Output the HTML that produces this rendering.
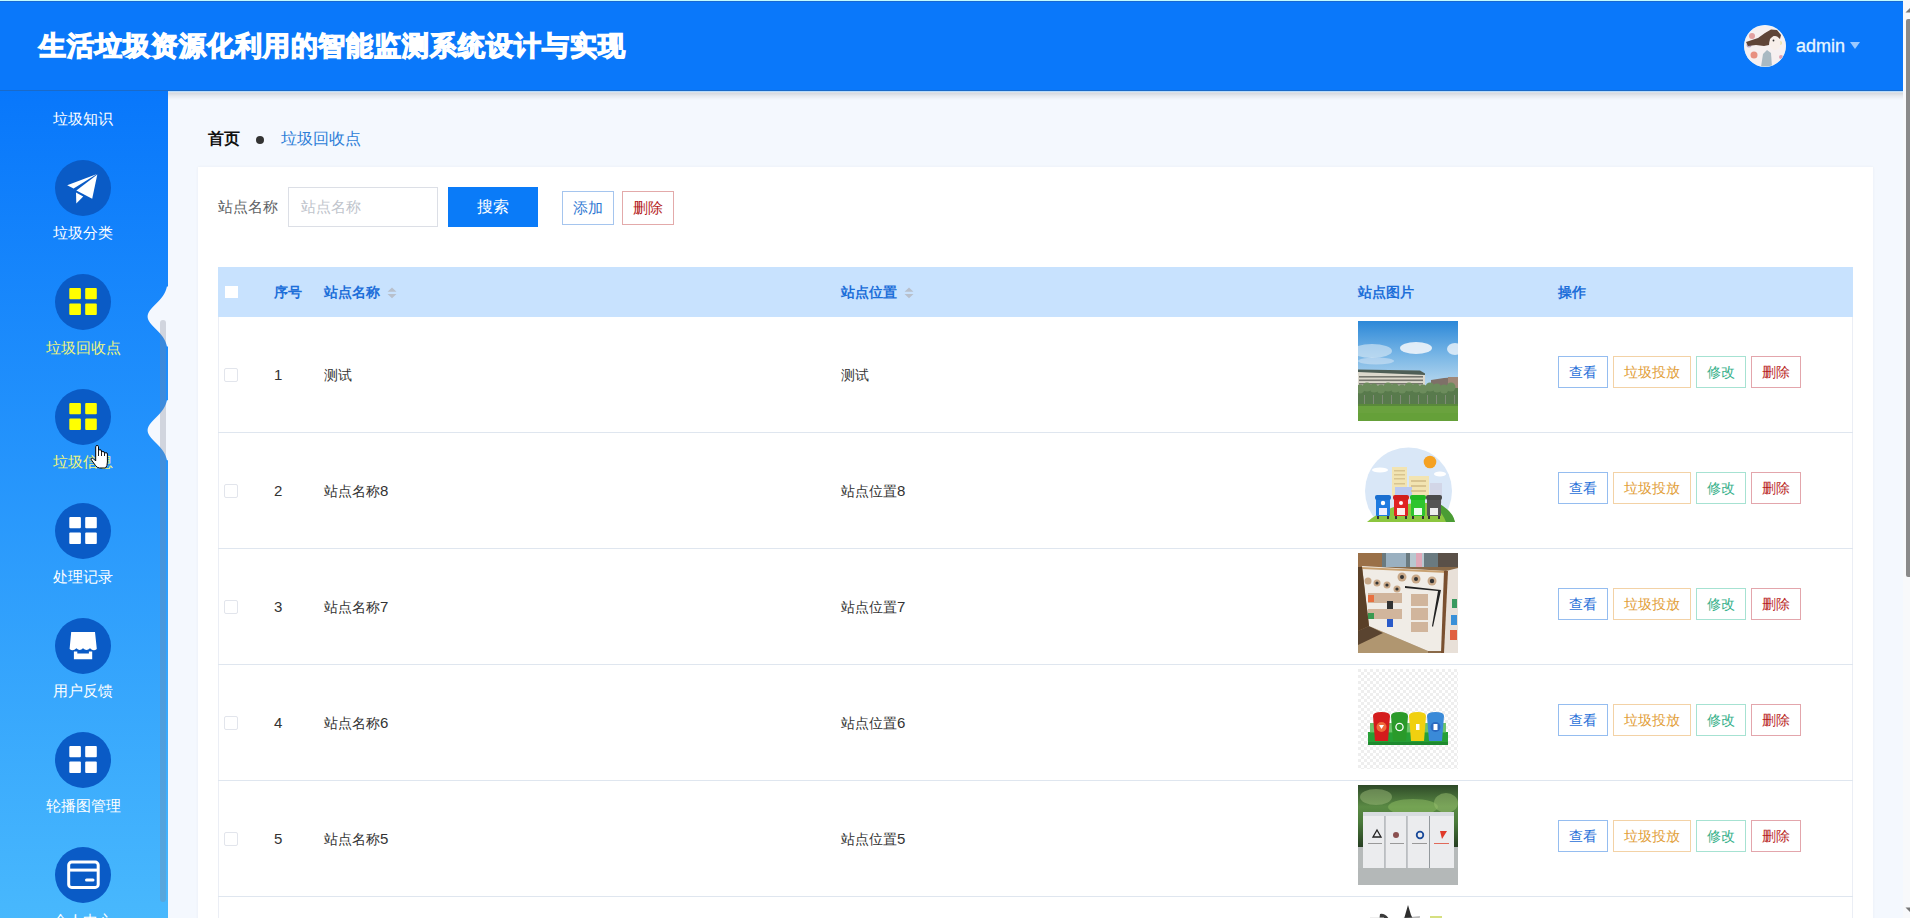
<!DOCTYPE html>
<html><head><meta charset="utf-8">
<style>
*{box-sizing:border-box;margin:0;padding:0}
html,body{width:1910px;height:918px;overflow:hidden}
body{font-family:"Liberation Sans",sans-serif;background:#f4f8fe;position:relative}
.abs{position:absolute}
#hdr{left:0;top:0;width:1903px;height:91px;background:#0a78fa;border-top:1px solid #c0faff;box-shadow:inset 0 1px 0 #1a68d0,inset 0 -1px 0 #1a6ac8;z-index:5}
#hsh{left:168px;top:91px;width:1735px;height:9px;background:linear-gradient(180deg,rgba(0,0,0,.04) 0,rgba(0,0,0,.12) 25%,rgba(0,0,0,.06) 55%,rgba(0,0,0,0) 100%);z-index:4}
#hline{left:168px;top:91px;width:1735px;height:1px;background:#b8dcfc;z-index:4}
#title{left:39px;top:27px;font-size:26.6px;letter-spacing:0.95px;font-weight:bold;color:#fff;white-space:nowrap;line-height:38px;-webkit-text-stroke:1.3px #fff}
#avatar{left:1744px;top:25px;width:42px;height:42px;border-radius:50%;background:radial-gradient(circle at 60% 40%,#f4e8e4 0,#e9d6cf 30%,#b59c8e 45%,#dfe4e6 60%,#c8d0d0 100%);border:1px solid #fff}
#admin{left:1796px;top:35px;font-size:18px;color:#e6f6ff;line-height:22px;-webkit-text-stroke:0.3px #e6f6ff}
#caret{left:1850px;top:42px;width:0;height:0;border-left:5.5px solid transparent;border-right:5.5px solid transparent;border-top:7px solid #9bc9ff}
#scroll{left:1903px;top:0;width:7px;height:918px;background:#f8f9fb}
#thumb{left:1906px;top:19px;width:4px;height:558px;background:#8a8a8a;border-radius:2px 0 0 2px}
#side{left:0;top:90px;width:168px;height:828px;background:linear-gradient(180deg,#0877fb 0%,#48b8fd 100%)}
.it{position:absolute;left:0;width:168px;height:114px}
.ic{position:absolute;left:55px;width:56px;height:56px;border-radius:50%;background:#0a5bc6}
.lb{position:absolute;left:0;width:166px;margin-top:-1px;text-align:center;font-size:15px;color:#fff;line-height:20px;white-space:nowrap}
.lb.act{color:#eef57c}
#sbar{left:160px;top:320px;width:6px;height:582px;background:rgba(128,134,150,.3);border-radius:3px}
#crumb1{left:208px;top:128px;font-size:16px;font-weight:bold;color:#111;line-height:22px}
#dot{left:256px;top:136px;width:8px;height:8px;border-radius:50%;background:#333}
#crumb2{left:281px;top:128px;font-size:16px;color:#2f7fd8;line-height:22px}
#card{left:198px;top:167px;width:1675px;height:760px;background:#fff;box-shadow:0 0 3px rgba(0,20,60,.05)}
#lbl{left:218px;top:197px;font-size:15px;color:#606266;line-height:20px}
#inp{left:288px;top:187px;width:150px;height:40px;border:1px solid #dcdfe6;background:#fff}
#inp span{position:absolute;left:12px;top:9px;font-size:15px;color:#c0c4cc;line-height:20px}
#sbtn{left:448px;top:187px;width:90px;height:40px;background:#0a7bf8;color:#fff;font-size:16px;text-align:center;line-height:40px}
.ob{position:absolute;border:1px solid;background:#fff;text-align:center;white-space:nowrap}
#addb{left:562px;top:191px;width:52px;height:34px;border-color:#a5c5ee;color:#2f78d2;font-size:15px;line-height:32px}
#delb{left:622px;top:191px;width:52px;height:34px;border-color:#e3aaaa;color:#b41a1a;font-size:15px;line-height:32px}
#thead{left:218px;top:267px;width:1635px;height:50px;background:#c8e2fe}
.th{position:absolute;top:282px;font-size:14px;font-weight:bold;color:#1e6fd9;line-height:20px;white-space:nowrap}
.sort{position:absolute;top:285px;width:10px;height:12px}
#hcb{left:225px;top:286px;width:13px;height:12px;background:#fff}
#tleft{left:218px;top:317px;width:1px;height:601px;background:#ebeef5}
#tright{left:1852px;top:317px;width:1px;height:601px;background:#ebeef5}
.rl{position:absolute;left:218px;width:1635px;height:1px;background:#dfe6ef}
.cb{position:absolute;left:224px;width:14px;height:14px;border:1px solid #e2e5ec;border-radius:2px;background:#fff}
.td{position:absolute;font-size:14px;color:#333;line-height:20px;white-space:nowrap}
.dg{font-size:15px}
.img{position:absolute;left:1358px;width:100px;height:100px;overflow:hidden}
.bt{position:absolute;height:32px;border:1px solid;background:#fff;font-size:14px;line-height:30px;text-align:center;white-space:nowrap}
.b1{left:1558px;width:50px;border-color:#95bdf0;color:#1f6fd8}
.b2{left:1613px;width:78px;border-color:#f3d2a6;color:#e2a03a}
.b3{left:1696px;width:50px;border-color:#a6e2d2;color:#36b08a}
.b4{left:1751px;width:50px;border-color:#e3a6ac;color:#b81e1e}
</style></head><body>
<div id="hdr" class="abs"></div><div id="hsh" class="abs"></div><div id="hline" class="abs"></div>
<div id="title" class="abs" style="z-index:6">生活垃圾资源化利用的智能监测系统设计与实现</div>
<svg class="abs" style="left:1744px;top:25px;z-index:6" width="42" height="42" viewBox="0 0 42 42"><defs><clipPath id="avc"><circle cx="21" cy="21" r="20.6"/></clipPath><filter id="bl"><feGaussianBlur stdDeviation="0.7"/></filter></defs><circle cx="21" cy="21" r="21" fill="#e6f6ff"/><g clip-path="url(#avc)" filter="url(#bl)"><rect width="42" height="42" fill="#f6f0f0"/><circle cx="8" cy="11" r="3" fill="#e2a0a0"/><circle cx="10" cy="30" r="3.5" fill="#e89080"/><circle cx="5" cy="20" r="2.5" fill="#b8a8c8"/><circle cx="36" cy="18" r="2" fill="#e8e0a0"/><circle cx="37" cy="32" r="2" fill="#e0a0b0"/><path d="M2 17 L14 13 L21 8 L27 4.5 L33 5 L37 10 L36 14 L30 11 L26 14 L25 20 L20 21 L12 20 L4 21 Z" fill="#5e4438"/><ellipse cx="31" cy="18" rx="5.5" ry="7" fill="#f8efea"/><circle cx="29.5" cy="15.5" r="0.9" fill="#333"/><path d="M17 42 L19 29 L23 25 L27 28 L28 42 Z" fill="#a9b9c2"/></g></svg>
<div id="admin" class="abs" style="z-index:6">admin</div>
<div id="caret" class="abs" style="z-index:6"></div>



<div id="side" class="abs"></div>
<div class="lb" style="top:109.5px">垃圾知识</div>
<div class="ic" style="top:159.5px"><svg width="56" height="56" viewBox="0 0 56 56"><path d="M42 14 L12.2 25.3 L18.6 28.6 Z" fill="#fff"/><path d="M42.3 14.5 L21.4 30.6 L37.2 38.7 Z" fill="#fff"/><path d="M21 32.4 L28.2 36.6 L21.3 43.4 Z" fill="#fff"/></svg></div>
<div class="lb" style="top:224.0px">垃圾分类</div>
<div class="ic" style="top:274px"><svg width="56" height="56" viewBox="0 0 56 56"><g fill="#ffff00"><rect x="14.3" y="14" width="11.6" height="11.2" rx="1"/><rect x="30.2" y="14" width="11.6" height="11.2" rx="1"/><rect x="14.3" y="29.6" width="11.6" height="11.3" rx="1"/><rect x="30.2" y="29.6" width="11.6" height="11.3" rx="1"/></g></svg></div>
<div class="lb act" style="top:338.5px">垃圾回收点</div>
<div class="ic" style="top:388.5px"><svg width="56" height="56" viewBox="0 0 56 56"><g fill="#ffff00"><rect x="14.3" y="14" width="11.6" height="11.2" rx="1"/><rect x="30.2" y="14" width="11.6" height="11.2" rx="1"/><rect x="14.3" y="29.6" width="11.6" height="11.3" rx="1"/><rect x="30.2" y="29.6" width="11.6" height="11.3" rx="1"/></g></svg></div>
<div class="lb act" style="top:453.0px">垃圾信息</div>
<div class="ic" style="top:503px"><svg width="56" height="56" viewBox="0 0 56 56"><g fill="#fff"><rect x="14.3" y="14" width="11.6" height="11.2" rx="1"/><rect x="30.2" y="14" width="11.6" height="11.2" rx="1"/><rect x="14.3" y="29.6" width="11.6" height="11.3" rx="1"/><rect x="30.2" y="29.6" width="11.6" height="11.3" rx="1"/></g></svg></div>
<div class="lb" style="top:567.5px">处理记录</div>
<div class="ic" style="top:617.5px"><svg width="56" height="56" viewBox="0 0 56 56"><path d="M16.2 13.9 L40 13.9 L41.8 31 Q38.4 33.8 35 30.2 Q31.5 33.8 28 30.2 Q24.7 33.8 21.4 30.2 Q18 33.8 14.6 31 Z" fill="#fff"/><path d="M18.9 33.6 L22.3 33.6 L22.3 35.5 L33.9 35.5 L33.9 33.6 L37.2 33.6 L37.2 41.2 L18.9 41.2 Z" fill="#fff"/></svg></div>
<div class="lb" style="top:682.0px">用户反馈</div>
<div class="ic" style="top:732px"><svg width="56" height="56" viewBox="0 0 56 56"><g fill="#fff"><rect x="14.3" y="14" width="11.6" height="11.2" rx="1"/><rect x="30.2" y="14" width="11.6" height="11.2" rx="1"/><rect x="14.3" y="29.6" width="11.6" height="11.3" rx="1"/><rect x="30.2" y="29.6" width="11.6" height="11.3" rx="1"/></g></svg></div>
<div class="lb" style="top:796.5px">轮播图管理</div>
<div class="ic" style="top:846.5px"><svg width="56" height="56" viewBox="0 0 56 56"><rect x="13.7" y="15.1" width="29.5" height="25.3" rx="3" fill="none" stroke="#fff" stroke-width="3"/><line x1="13.7" y1="23.1" x2="43.2" y2="23.1" stroke="#fff" stroke-width="3"/><line x1="31.5" y1="32.9" x2="38" y2="32.9" stroke="#fff" stroke-width="3" stroke-linecap="round"/></svg></div>
<div class="lb" style="top:912.0px">个人中心</div>
<svg class="abs" style="left:140px;top:280px" width="28" height="190" viewBox="0 0 28 190"><polygon points="28,6.399999999999999 26.92,6.40 26.69,7.40 26.42,8.40 26.11,9.40 25.76,10.40 25.35,11.40 24.89,12.40 24.37,13.40 23.80,14.40 23.17,15.40 22.47,16.40 21.72,17.40 20.92,18.40 20.06,19.40 19.16,20.40 18.22,21.40 17.24,22.40 16.25,23.40 15.25,24.40 14.26,25.40 13.28,26.40 12.34,27.40 11.45,28.40 10.62,29.40 9.86,30.40 9.20,31.40 8.64,32.40 8.19,33.40 7.86,34.40 7.67,35.40 7.60,36.40 7.67,37.40 7.86,38.40 8.19,39.40 8.64,40.40 9.20,41.40 9.86,42.40 10.62,43.40 11.45,44.40 12.34,45.40 13.28,46.40 14.26,47.40 15.25,48.40 16.25,49.40 17.24,50.40 18.22,51.40 19.16,52.40 20.06,53.40 20.92,54.40 21.72,55.40 22.47,56.40 23.17,57.40 23.80,58.40 24.37,59.40 24.89,60.40 25.35,61.40 25.76,62.40 26.11,63.40 26.42,64.40 26.69,65.40 26.92,66.40 28,66.4" fill="#f4f8fe"/><polygon points="28,120.19999999999999 26.92,120.20 26.69,121.20 26.42,122.20 26.11,123.20 25.76,124.20 25.35,125.20 24.89,126.20 24.37,127.20 23.80,128.20 23.17,129.20 22.47,130.20 21.72,131.20 20.92,132.20 20.06,133.20 19.16,134.20 18.22,135.20 17.24,136.20 16.25,137.20 15.25,138.20 14.26,139.20 13.28,140.20 12.34,141.20 11.45,142.20 10.62,143.20 9.86,144.20 9.20,145.20 8.64,146.20 8.19,147.20 7.86,148.20 7.67,149.20 7.60,150.20 7.67,151.20 7.86,152.20 8.19,153.20 8.64,154.20 9.20,155.20 9.86,156.20 10.62,157.20 11.45,158.20 12.34,159.20 13.28,160.20 14.26,161.20 15.25,162.20 16.25,163.20 17.24,164.20 18.22,165.20 19.16,166.20 20.06,167.20 20.92,168.20 21.72,169.20 22.47,170.20 23.17,171.20 23.80,172.20 24.37,173.20 24.89,174.20 25.35,175.20 25.76,176.20 26.11,177.20 26.42,178.20 26.69,179.20 26.92,180.20 28,180.2" fill="#f4f8fe"/></svg>
<div id="sbar" class="abs"></div>
<div id="scroll" class="abs"></div><div id="thumb" class="abs"></div><svg class="abs" style="left:1905px;top:7px" width="5" height="6"><path d="M5 1 L5 5.5 L0.5 5.5 Z" fill="#777"/></svg><svg class="abs" style="left:1905px;top:907px" width="5" height="6"><path d="M5 0.5 L5 5 L0.5 0.5 Z" fill="#777"/></svg>
<div id="crumb1" class="abs">首页</div><div id="dot" class="abs"></div><div id="crumb2" class="abs">垃圾回收点</div>
<div id="card" class="abs"></div>
<div id="lbl" class="abs">站点名称</div><div id="inp" class="abs"><span>站点名称</span></div><div id="sbtn" class="abs">搜索</div>
<div id="addb" class="ob">添加</div><div id="delb" class="ob">删除</div>
<div id="thead" class="abs"></div><div id="hcb" class="abs"></div>
<div class="th" style="left:274px">序号</div>
<div class="th" style="left:324px">站点名称</div>
<div class="sort" style="left:387px"><svg width="10" height="12" viewBox="0 0 10 12"><path d="M5 0.5 L9.5 4.8 L0.5 4.8 Z M0.5 7 L9.5 7 L5 11.3 Z" fill="#b8c0cc"/></svg></div>
<div class="th" style="left:841px">站点位置</div>
<div class="sort" style="left:904px"><svg width="10" height="12" viewBox="0 0 10 12"><path d="M5 0.5 L9.5 4.8 L0.5 4.8 Z M0.5 7 L9.5 7 L5 11.3 Z" fill="#b8c0cc"/></svg></div>
<div class="th" style="left:1358px">站点图片</div>
<div class="th" style="left:1558px">操作</div>
<div id="tleft" class="abs"></div><div id="tright" class="abs"></div>
<div class="rl" style="top:432px"></div>
<div class="cb" style="top:368px"></div>
<div class="td" style="left:274px;top:365px"><span class="dg">1</span></div>
<div class="td" style="left:324px;top:365px">测试</div>
<div class="td" style="left:841px;top:365px">测试</div>
<div class="img" style="top:321px"><svg width="100" height="100" viewBox="0 0 100 100"><defs><linearGradient id="sky" x1="0" y1="0" x2="0" y2="1"><stop offset="0" stop-color="#2c88d8"/><stop offset="0.5" stop-color="#7cb8e6"/><stop offset="1" stop-color="#c8e0f0"/></linearGradient></defs>
<rect width="100" height="72" fill="url(#sky)"/>
<ellipse cx="58" cy="27" rx="16" ry="6" fill="#eef4fa" opacity=".9"/><ellipse cx="14" cy="30" rx="20" ry="7" fill="#e8f0f8" opacity=".55"/><ellipse cx="18" cy="40" rx="18" ry="3.5" fill="#e8f0f8" opacity=".45"/><ellipse cx="97" cy="28" rx="8" ry="6" fill="#eef4fa" opacity=".8"/>
<path d="M0 49 L62 50 L67 53 L67 72 L0 72 Z" fill="#dcd8cc"/><path d="M0 48.5 L62 49.5 L67 52.5 L67 54 L0 51 Z" fill="#4e5e56"/>
<g fill="#76766e"><rect x="1" y="55" width="64" height="1.6"/><rect x="1" y="58.5" width="64" height="1.6"/><rect x="1" y="62" width="64" height="1.6"/><rect x="1" y="65.5" width="64" height="1.6"/></g>
<path d="M73 59 L86 57 L100 56 L100 72 L73 72 Z" fill="#7e7068"/><rect x="90" y="56" width="10" height="16" fill="#a08878"/>
<rect x="0" y="67" width="100" height="17" fill="#587a4c"/><circle cx="2" cy="68" r="4.5" fill="#6c8c5c"/><circle cx="9" cy="66" r="4.5" fill="#6c8c5c"/><circle cx="16" cy="67" r="4.5" fill="#6c8c5c"/><circle cx="23" cy="68" r="4.5" fill="#6c8c5c"/><circle cx="30" cy="66" r="4.5" fill="#6c8c5c"/><circle cx="37" cy="67" r="4.5" fill="#6c8c5c"/><circle cx="44" cy="68" r="4.5" fill="#6c8c5c"/><circle cx="51" cy="66" r="4.5" fill="#6c8c5c"/><circle cx="58" cy="67" r="4.5" fill="#6c8c5c"/><circle cx="65" cy="68" r="4.5" fill="#6c8c5c"/><circle cx="72" cy="66" r="4.5" fill="#6c8c5c"/><circle cx="79" cy="67" r="4.5" fill="#6c8c5c"/><circle cx="86" cy="68" r="4.5" fill="#6c8c5c"/><circle cx="93" cy="66" r="4.5" fill="#6c8c5c"/><rect x="6" y="74" width="0.8" height="9" fill="#8a9080"/><rect x="15" y="74" width="0.8" height="9" fill="#8a9080"/><rect x="24" y="74" width="0.8" height="9" fill="#8a9080"/><rect x="33" y="74" width="0.8" height="9" fill="#8a9080"/><rect x="42" y="74" width="0.8" height="9" fill="#8a9080"/><rect x="51" y="74" width="0.8" height="9" fill="#8a9080"/><rect x="60" y="74" width="0.8" height="9" fill="#8a9080"/><rect x="69" y="74" width="0.8" height="9" fill="#8a9080"/><rect x="78" y="74" width="0.8" height="9" fill="#8a9080"/><rect x="87" y="74" width="0.8" height="9" fill="#8a9080"/><rect x="96" y="74" width="0.8" height="9" fill="#8a9080"/>
<rect x="0" y="83" width="100" height="17" fill="#6aa23e"/><rect x="0" y="83" width="100" height="2" fill="#5a8a3a"/><rect x="0" y="92" width="100" height="8" fill="#64a038" opacity=".7"/></svg></div>
<div class="bt b1" style="top:356px">查看</div><div class="bt b2" style="top:356px">垃圾投放</div><div class="bt b3" style="top:356px">修改</div><div class="bt b4" style="top:356px">删除</div>
<div class="rl" style="top:548px"></div>
<div class="cb" style="top:484px"></div>
<div class="td" style="left:274px;top:481px"><span class="dg">2</span></div>
<div class="td" style="left:324px;top:481px">站点名称<span class="dg">8</span></div>
<div class="td" style="left:841px;top:481px">站点位置<span class="dg">8</span></div>
<div class="img" style="top:437px"><svg width="100" height="100" viewBox="0 0 100 100"><rect width="100" height="100" fill="#fff"/>
<circle cx="50.5" cy="54" r="43.5" fill="#d9e7f7"/>
<circle cx="72" cy="25" r="6.3" fill="#f5a122"/>
<ellipse cx="22" cy="33" rx="8" ry="2.5" fill="#fff"/><ellipse cx="82" cy="37" rx="6" ry="2.5" fill="#fff"/>
<rect x="34" y="30" width="15" height="29" fill="#f2e4b2"/><rect x="51" y="39" width="20" height="23" fill="#f2e4b2"/>
<rect x="72" y="46" width="12" height="20" fill="#cfcfe0" opacity=".7"/>
<rect x="37" y="50" width="17" height="10" fill="#b9c8f2"/>
<g fill="#d8c490"><rect x="36" y="33" width="11" height="1.5"/><rect x="36" y="37" width="11" height="1.5"/><rect x="36" y="41" width="11" height="1.5"/><rect x="36" y="46" width="11" height="1.5"/><rect x="53" y="43" width="15" height="2"/><rect x="53" y="48" width="15" height="2"/><rect x="53" y="53" width="15" height="2"/></g>
<rect x="0" y="84.5" width="100" height="16" fill="#fff"/><path d="M9 85 Q30 67 60 66 Q88 64 97 85 Z" fill="#8cc63f"/><path d="M80 66 Q95 74 97 85 L88 85 Q84 74 74 68 Z" fill="#4a9c34"/>
<g><rect x="18" y="61" width="14" height="18" rx="1" fill="#1f7be0"/><rect x="17" y="58" width="16" height="5" rx="2" fill="#1a6fd0"/><rect x="21" y="71" width="8" height="7" fill="#eef"/><circle cx="25" cy="66" r="2.2" fill="#fff"/>
<rect x="36" y="61" width="14" height="18" rx="1" fill="#e02424"/><rect x="35" y="58" width="16" height="5" rx="2" fill="#d21c1c"/><rect x="39" y="71" width="8" height="7" fill="#fee"/><circle cx="43" cy="66" r="2" fill="#fff"/>
<rect x="53" y="61" width="14" height="18" rx="1" fill="#2ec52e"/><rect x="52" y="58" width="16" height="5" rx="2" fill="#22b822"/><rect x="56" y="71" width="8" height="7" fill="#efe"/>
<rect x="69" y="61" width="14" height="18" rx="1" fill="#555"/><rect x="68" y="58" width="16" height="5" rx="2" fill="#4a4a4a"/><rect x="72" y="71" width="8" height="7" fill="#eee"/>
<g fill="#333"><rect x="19" y="79" width="2" height="3"/><rect x="29" y="79" width="2" height="3"/><rect x="37" y="79" width="2" height="3"/><rect x="47" y="79" width="2" height="3"/><rect x="54" y="79" width="2" height="3"/><rect x="64" y="79" width="2" height="3"/><rect x="70" y="79" width="2" height="3"/><rect x="80" y="79" width="2" height="3"/></g></g></svg></div>
<div class="bt b1" style="top:472px">查看</div><div class="bt b2" style="top:472px">垃圾投放</div><div class="bt b3" style="top:472px">修改</div><div class="bt b4" style="top:472px">删除</div>
<div class="rl" style="top:664px"></div>
<div class="cb" style="top:600px"></div>
<div class="td" style="left:274px;top:597px"><span class="dg">3</span></div>
<div class="td" style="left:324px;top:597px">站点名称<span class="dg">7</span></div>
<div class="td" style="left:841px;top:597px">站点位置<span class="dg">7</span></div>
<div class="img" style="top:553px"><svg width="100" height="100" viewBox="0 0 100 100"><rect width="100" height="100" fill="#8a6a48"/>
<rect x="0" y="0" width="100" height="14" fill="#6a7a80"/><rect x="0" y="0" width="24" height="14" fill="#9a7048"/><rect x="28" y="0" width="20" height="14" fill="#9ab0c0"/><rect x="52" y="0" width="14" height="14" fill="#b8c8d0"/><rect x="58" y="0" width="6" height="14" fill="#e0a8b8"/><rect x="80" y="0" width="20" height="14" fill="#5a5048"/>
<path d="M0 78 L11 73 L70 98 L70 100 L0 100 Z" fill="#b09670"/><path d="M0 78 L11 73 L25 80 L0 92 Z" fill="#5a4430"/>
<path d="M4 13 L88 18 L85 98 L70 98 L11 73 Z" fill="#f0ece6"/>
<path d="M3 14 L88 18 L89 20 L4 16 Z" fill="#c8a070"/>
<g fill="#c8a888"><circle cx="44" cy="24" r="4.5"/><circle cx="58" cy="26" r="4.5"/><circle cx="74" cy="28" r="4.5"/><circle cx="10" cy="28" r="3.5"/><circle cx="19" cy="30" r="3.5"/><circle cx="29" cy="32" r="3.5"/><circle cx="39" cy="36" r="3.5"/></g>
<g fill="#333"><circle cx="44" cy="24" r="2"/><circle cx="58" cy="26" r="2"/><circle cx="74" cy="28" r="2.2"/><circle cx="19" cy="30" r="1.6"/><circle cx="29" cy="32" r="1.6"/><circle cx="39" cy="36" r="1.6"/></g>
<path d="M47 33 L83 37 L75 74 L74 73 L80 38 L47 35 Z" fill="#222"/>
<g fill="#c9a88a"><rect x="10" y="40" width="34" height="10" opacity=".8"/><rect x="10" y="56" width="34" height="10" opacity=".8"/><rect x="53" y="41" width="17" height="12" opacity=".8"/><rect x="53" y="55" width="17" height="12" opacity=".8"/><rect x="53" y="69" width="17" height="10" opacity=".8"/></g>
<rect x="10" y="42" width="6" height="7" fill="#e87040"/><rect x="29" y="48" width="6" height="8" fill="#333"/><rect x="10" y="60" width="6" height="6" fill="#3a9a50"/><rect x="29" y="66" width="6" height="8" fill="#2a5ac8"/>
<path d="M88 18 L100 15 L100 100 L85 100 Z" fill="#e8e0d8"/><path d="M86 18 L90 18 L86 100 L83 100 Z" fill="#7a5030"/>
<rect x="94" y="46" width="5" height="9" fill="#3a9a60"/><rect x="93" y="62" width="6" height="10" fill="#3a90d8"/><rect x="92" y="77" width="7" height="10" fill="#e06040"/>
<path d="M0 14 L4 14 L11 73 L0 78 Z" fill="#5a4028"/></svg></div>
<div class="bt b1" style="top:588px">查看</div><div class="bt b2" style="top:588px">垃圾投放</div><div class="bt b3" style="top:588px">修改</div><div class="bt b4" style="top:588px">删除</div>
<div class="rl" style="top:780px"></div>
<div class="cb" style="top:716px"></div>
<div class="td" style="left:274px;top:713px"><span class="dg">4</span></div>
<div class="td" style="left:324px;top:713px">站点名称<span class="dg">6</span></div>
<div class="td" style="left:841px;top:713px">站点位置<span class="dg">6</span></div>
<div class="img" style="top:669px"><svg width="100" height="100" viewBox="0 0 100 100"><defs><pattern id="chk" width="6" height="6" patternUnits="userSpaceOnUse"><rect width="6" height="6" fill="#fff"/><rect width="3" height="3" fill="#eee"/><rect x="3" y="3" width="3" height="3" fill="#eee"/></pattern></defs><rect width="100" height="100" fill="url(#chk)"/>
<rect x="10" y="63" width="80" height="13" fill="#26a036"/><rect x="12" y="54" width="76" height="10" fill="#4ab84a" opacity=".8"/><rect x="10" y="73" width="80" height="3" fill="#1e8a2e"/><path d="M15 47 Q15 43 23.5 43 Q32 43 32 47 L30 72 L17 72 Z" fill="#d41c1c"/><path d="M33 47 Q33 43 41.5 43 Q50 43 50 47 L48 72 L35 72 Z" fill="#2a9a2a"/><path d="M51 47 Q51 43 59.5 43 Q68 43 68 47 L66 72 L53 72 Z" fill="#f0d010"/><path d="M69 47 Q69 43 77.5 43 Q86 43 86 47 L84 72 L71 72 Z" fill="#3a8ad8"/><circle cx="23.5" cy="58" r="5" fill="#f06a3a"/><path d="M21 56 L26 56 L23.5 60 Z" fill="#fff"/><circle cx="41.5" cy="58" r="3.6" fill="none" stroke="#fff" stroke-width="1.3"/><rect x="58" y="55" width="3.5" height="6" fill="#fff"/><circle cx="77.5" cy="58" r="5" fill="#2a6ac0"/><rect x="75.5" y="55" width="4" height="6" fill="#fff"/></svg></div>
<div class="bt b1" style="top:704px">查看</div><div class="bt b2" style="top:704px">垃圾投放</div><div class="bt b3" style="top:704px">修改</div><div class="bt b4" style="top:704px">删除</div>
<div class="rl" style="top:896px"></div>
<div class="cb" style="top:832px"></div>
<div class="td" style="left:274px;top:829px"><span class="dg">5</span></div>
<div class="td" style="left:324px;top:829px">站点名称<span class="dg">5</span></div>
<div class="td" style="left:841px;top:829px">站点位置<span class="dg">5</span></div>
<div class="img" style="top:785px"><svg width="100" height="100" viewBox="0 0 100 100"><defs><linearGradient id="fol" x1="0" y1="0" x2="0" y2="1"><stop offset="0" stop-color="#2e4a28"/><stop offset="0.35" stop-color="#5a8a44"/><stop offset="0.6" stop-color="#4a7a3a"/><stop offset="1" stop-color="#263e22"/></linearGradient></defs><rect width="100" height="100" fill="#b6baba"/>
<rect x="0" y="0" width="100" height="62" fill="url(#fol)"/><ellipse cx="18" cy="12" rx="16" ry="8" fill="#9ab878" opacity=".5"/><ellipse cx="55" cy="22" rx="25" ry="8" fill="#8ab860" opacity=".55"/><ellipse cx="88" cy="18" rx="12" ry="10" fill="#9ac070" opacity=".5"/>
<rect x="0" y="83" width="100" height="17" fill="#b4b8b8"/>
<rect x="5" y="27" width="91" height="56" fill="#ebecee"/><rect x="5" y="27" width="91" height="4" fill="#d8dce0"/>
<g fill="#8a9094"><rect x="26.5" y="31" width="0.9" height="52"/><rect x="48.5" y="31" width="0.9" height="52"/><rect x="71" y="31" width="0.9" height="52"/></g>
<path d="M15 52 L19 45 L23 52 Z" fill="none" stroke="#222" stroke-width="1.3"/><circle cx="38" cy="50" r="3" fill="#8a5050"/><circle cx="62" cy="50" r="3.3" fill="none" stroke="#1a4a9a" stroke-width="1.8"/><path d="M82 46 L89 46 L84 54 Z" fill="#e03a2a"/>
<g fill="#999"><rect x="10" y="58" width="14" height="1"/><rect x="32" y="58" width="14" height="1"/><rect x="54" y="58" width="15" height="1"/></g><rect x="76" y="58" width="15" height="1" fill="#e06a5a"/></svg></div>
<div class="bt b1" style="top:820px">查看</div><div class="bt b2" style="top:820px">垃圾投放</div><div class="bt b3" style="top:820px">修改</div><div class="bt b4" style="top:820px">删除</div>
<div class="rl" style="top:1012px"></div>
<div class="cb" style="top:948px"></div>
<div class="td" style="left:274px;top:945px"><span class="dg">6</span></div>
<div class="td" style="left:324px;top:945px">站点名称<span class="dg">4</span></div>
<div class="td" style="left:841px;top:945px">站点位置<span class="dg">4</span></div>
<div class="img" style="top:901px"><svg width="100" height="100" viewBox="0 0 100 100"><rect width="100" height="100" fill="#fff"/><path d="M22 13 Q27 12 31 18 L30 30 L20 30 Z" fill="#3a3a3a"/><path d="M50 4 L53 14 L55 18 L47 30 L46 18 Z" fill="#2e2e2e"/><path d="M44 17 L62 15 L60 30 L44 30 Z" fill="#8a8a8a" opacity=".6"/><rect x="72" y="15" width="12" height="15" fill="#d6e080"/><rect x="12" y="16" width="14" height="14" fill="#ddd" opacity=".5"/></svg></div>
<div class="bt b1" style="top:936px">查看</div><div class="bt b2" style="top:936px">垃圾投放</div><div class="bt b3" style="top:936px">修改</div><div class="bt b4" style="top:936px">删除</div>
<svg class="abs" style="left:90px;top:445px;z-index:20" width="19" height="25" viewBox="0 0 19 25"><path d="M5.7 1.6 Q5.7 0.5 7.1 0.5 Q8.5 0.5 8.5 1.6 L8.5 5.6 Q9 4.7 10 4.7 Q11.5 4.7 11.5 6 L11.5 7.3 Q12 6.5 13 6.5 Q14.5 6.5 14.5 8 L14.5 8.6 Q15 7.7 16 7.7 Q17.4 7.7 17.4 9 L17.4 17 Q17.4 21 15.5 23 L9.5 23 Q7.5 23 5.5 20.5 L1.3 14.8 Q0.6 13.8 1.5 13.3 Q2.5 12.8 3.5 13.8 L5.7 16 Z" fill="#fff" stroke="#000" stroke-width="1"/><path d="M8.5 5.6 L8.5 11 M11.5 7.3 L11.5 11 M14.5 8.6 L14.5 11" stroke="#000" stroke-width="0.9"/></svg>
</body></html>
